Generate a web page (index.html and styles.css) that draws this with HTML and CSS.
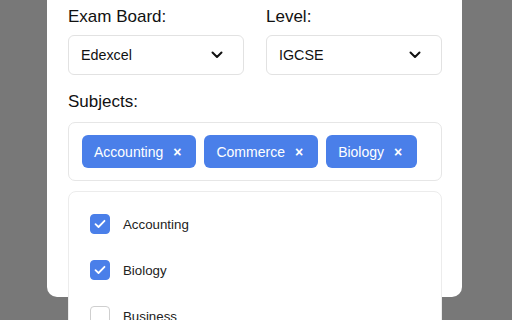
FILE: index.html
```html
<!DOCTYPE html>
<html lang="en">
<head>
    <meta charset="UTF-8">
    <meta name="viewport" content="width=device-width, initial-scale=1.0">
    <title>Subjects</title>
    <link rel="stylesheet" href="styles.css">
</head>
<body>
<div class="card">
    <div class="row">
        <div class="field">
            <label class="label">Exam Board:</label>
            <div class="select">
                <span>Edexcel</span>
                <svg class="chevron" width="12" height="8" viewBox="0 0 12 8">
                    <path d="M1.5 1.5 L6 6 L10.5 1.5" fill="none" stroke="#111" stroke-width="2" stroke-linecap="round" stroke-linejoin="round"/>
                </svg>
            </div>
        </div>
        <div class="field">
            <label class="label">Level:</label>
            <div class="select">
                <span>IGCSE</span>
                <svg class="chevron" width="12" height="8" viewBox="0 0 12 8">
                    <path d="M1.5 1.5 L6 6 L10.5 1.5" fill="none" stroke="#111" stroke-width="2" stroke-linecap="round" stroke-linejoin="round"/>
                </svg>
            </div>
        </div>
    </div>

    <div class="subjects">
        <label class="label">Subjects:</label>
        <div class="multi">
            <div class="tags">
                <span class="tag">Accounting <span class="remove">×</span></span>
                <span class="tag">Commerce <span class="remove">×</span></span>
                <span class="tag">Biology <span class="remove">×</span></span>
            </div>
            <div class="menu">
                <div class="option">
                    <span class="box checked">
                        <svg width="12" height="10" viewBox="0 0 12 10"><path d="M1.5 5.2 L4.5 8 L10.5 1.8" fill="none" stroke="#fff" stroke-width="1.8" stroke-linecap="round" stroke-linejoin="round"/></svg>
                    </span>
                    Accounting
                </div>
                <div class="option">
                    <span class="box checked">
                        <svg width="12" height="10" viewBox="0 0 12 10"><path d="M1.5 5.2 L4.5 8 L10.5 1.8" fill="none" stroke="#fff" stroke-width="1.8" stroke-linecap="round" stroke-linejoin="round"/></svg>
                    </span>
                    Biology
                </div>
                <div class="option">
                    <span class="box"></span>
                    Business
                </div>
            </div>
        </div>
    </div>
</div>
</body>
</html>
```

FILE: styles.css
```css
html, body {
    height: 320px;
    overflow: hidden;
}

body {
    margin: 0;
    padding: 0;
    background-color: #787878;
    font-family: "Liberation Sans", Arial, Helvetica, sans-serif;
    color: #111;
}

.card {
    width: 415px;
    box-sizing: border-box;
    margin: -13px 0 0 47px;
    padding: 20px 20px 116px 21px;
    background-color: #fff;
    border-radius: 10px;
}

.row {
    display: flex;
    gap: 22px;
}

.field {
    width: 176px;
}

.label {
    display: block;
    font-size: 17px;
    line-height: 20px;
    margin-bottom: 8px;
}

.select {
    display: flex;
    align-items: center;
    justify-content: space-between;
    height: 40px;
    box-sizing: border-box;
    padding: 0 20px 0 12px;
    border: 1px solid #e2e2e2;
    border-radius: 6px;
    font-size: 14.3px;
}

.subjects {
    margin-top: 17px;
}

.subjects .label {
    margin-bottom: 10px;
}

.multi {
    position: relative;
}

.tags {
    display: flex;
    gap: 8px;
    padding: 12px 13px;
    border: 1px solid #e6e6e6;
    border-radius: 7px;
}

.tag {
    display: flex;
    align-items: center;
    height: 33px;
    padding: 0 15px 0 12px;
    background-color: #4a7fe9;
    color: #fff;
    font-size: 14px;
    border-radius: 6px;
}

.remove {
    margin-left: 10px;
    font-size: 14px;
    font-weight: bold;
}

.menu {
    position: absolute;
    z-index: 10;
    top: calc(100% + 10px);
    left: 0;
    right: 0;
    padding: 9px 0;
    background-color: #fff;
    border: 1px solid #ececec;
    border-radius: 8px;
}

.option {
    display: flex;
    align-items: center;
    gap: 13px;
    padding: 13px 21px;
    font-size: 13.3px;
    color: #222;
}

.box {
    display: flex;
    align-items: center;
    justify-content: center;
    width: 20px;
    height: 20px;
    box-sizing: border-box;
    border: 1px solid #cfcfcf;
    border-radius: 4px;
}

.box.checked {
    background-color: #4a7fe9;
    border-color: #4a7fe9;
}
```
